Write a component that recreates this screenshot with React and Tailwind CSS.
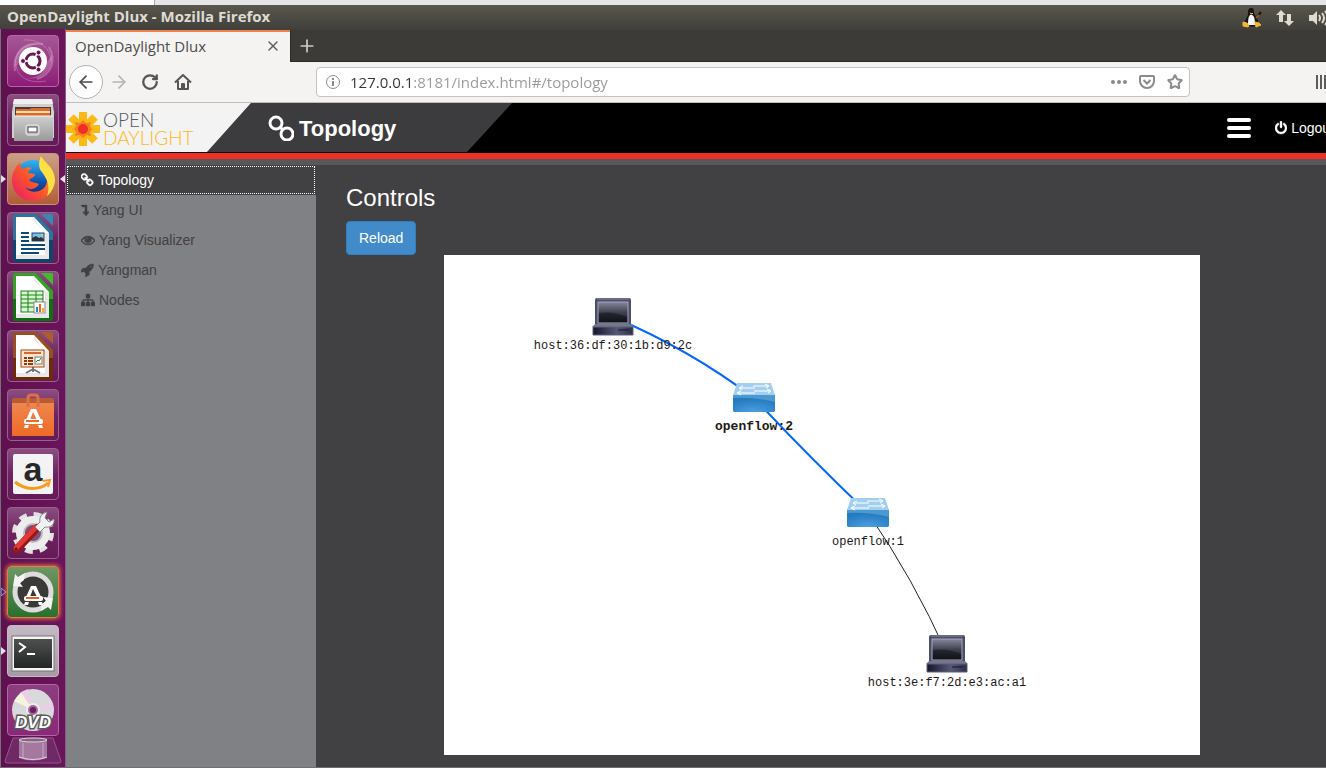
import { ArrowLeft, ArrowRight, Plus, RotateCw, Star, X } from 'lucide-react'
import clsx from 'clsx'

const paths = {
  link: 'M1456 1216q0-40-28-68l-208-208q-28-28-68-28-42 0-72 32 3 3 19 18.5t21.5 21.5 15 19 13 25.5 3.5 27.5q0 40-28 68t-68 28q-15 0-27.5-3.5t-25.5-13-19-15-21.5-21.5-18.5-19q-33 31-33 73 0 40 28 68l206 207q27 27 68 27 40 0 68-26l147-146q28-28 28-67zm-703-705q0-40-28-68l-206-207q-28-28-68-28-39 0-68 27l-147 146q-28 28-28 67 0 40 28 68l208 208q27 27 68 27 42 0 72-31-3-3-19-18.5t-21.5-21.5-15-19-13-25.5-3.5-27.5q0-40 28-68t68-28q15 0 27.5 3.5t25.5 13 19 15 21.5 21.5 18.5 19q33-31 33-73zm895 705q0 120-85 203l-147 146q-83 83-203 83-121 0-204-85l-206-207q-83-83-83-203 0-123 88-209l-88-88q-86 88-208 88-120 0-204-84l-208-208q-84-84-84-204t85-203l147-146q83-83 203-83 121 0 204 85l206 207q83 83 83 203 0 123-88 209l88 88q86-88 208-88 120 0 204 84l208 208q84 84 84 204z',
  levelDown: 'M32 256h672q26 0 45 19t19 45v800h192q40 0 58 38 16 36-10 68l-320 384q-18 22-48 22t-50-22l-320-384q-26-30-10-68 18-38 58-38h194v-608h-320q-14 0-24-11l-160-192q-14-16-5-35 9-18 29-18z',
  eye: 'M1664 960q-152-236-381-353 61 104 61 225 0 185-131.5 316.5t-316.5 131.5-316.5-131.5-131.5-316.5q0-121 61-225-229 117-381 353 133 205 333.5 326.5t434.5 121.5 434.5-121.5 333.5-326.5zm-720-384q0-20-14-34t-34-14q-125 0-214.5 89.5t-89.5 214.5q0 20 14 34t34 14 34-14 14-34q0-86 61-147t147-61q20 0 34-14t14-34zm848 384q0 34-20 69-140 230-376.5 368.5t-499.5 138.5-499.5-139-376.5-368q-20-35-20-69t20-69q140-229 376.5-368t499.5-139 499.5 139 376.5 368q20 35 20 69z',
  rocket: 'M1440 448q0-40-28-68t-68-28-68 28-28 68 28 68 68 28 68-28 28-68zm224-288q0 249-75.5 430.5t-253.5 360.5q-81 80-195 176l-20 379q-2 16-16 26l-384 224q-7 4-16 4-12 0-23-9l-64-64q-13-14-8-32l85-276-281-281-276 85q-3 1-9 1-14 0-23-9l-64-64q-17-19-5-39l224-384q10-14 26-16l379-20q96-114 176-195 188-187 358-258t431-71q14 0 24 9.5t10 22.5z',
  sitemap: 'M1792 1248v320q0 40-28 68t-68 28h-320q-40 0-68-28t-28-68v-320q0-40 28-68t68-28h96v-192h-512v192h96q40 0 68 28t28 68v320q0 40-28 68t-68 28h-320q-40 0-68-28t-28-68v-320q0-40 28-68t68-28h96v-192h-512v192h96q40 0 68 28t28 68v320q0 40-28 68t-68 28h-320q-40 0-68-28t-28-68v-320q0-40 28-68t68-28h96v-192q0-52 38-90t90-38h512v-192h-96q-40 0-68-28t-28-68v-320q0-40 28-68t68-28h320q40 0 68 28t28 68v320q0 40-28 68t-68 28h-96v192h512q52 0 90 38t38 90v192h96q40 0 68 28t28 68z',
  power: 'M1664 896q0 156-61 298t-164 245-245 164-298 61-298-61-245-164-164-245-61-298q0-182 80.5-343t226.5-270q43-32 95.5-25t83.5 50q32 42 24.5 94.5t-49.5 84.5q-98 74-151.5 181t-53.5 228q0 104 40.5 198.5t109.5 163.5 163.5 109.5 198.5 40.5 198.5-40.5 163.5-109.5 109.5-163.5 40.5-198.5q0-121-53.5-228t-151.5-181q-42-32-49.5-84.5t24.5-94.5q31-43 84-50t95 25q146 109 226.5 270t80.5 343zm-640-768v640q0 52-38 90t-90 38-90-38-38-90v-640q0-52 38-90t90-38 90 38 38 90z',
}

function Glyph({ name, box, className }) {
  return (
    <svg viewBox={box} className={clsx('h-[14px] shrink-0 fill-current stroke-current', className)} strokeWidth="50" aria-hidden="true">
      <path d={paths[name]} />
    </svg>
  )
}

const menu = [
  { label: 'Topology', icon: 'link', box: '64 0 1664 1792', width: 'w-[13px]', active: true },
  { label: 'Yang UI', icon: 'levelDown', box: '0 0 1024 1792', width: 'w-[8px]' },
  { label: 'Yang Visualizer', icon: 'eye', box: '0 0 1792 1792', width: 'w-[14px]' },
  { label: 'Yangman', icon: 'rocket', box: '64 0 1664 1792', width: 'w-[13px]' },
  { label: 'Nodes', icon: 'sitemap', box: '0 0 1792 1792', width: 'w-[14px]' },
]

/* ---------- launcher icons, all on a 52x52 grid ---------- */

function DashIcon() {
  return (
    <>
      <g fill="none" stroke="#e3b5d8" strokeOpacity=".4">
        <path d="M8 36C5 18 17 6 36 9" strokeWidth="2" />
        <path d="M42 12c8 14 2 28-12 32" strokeWidth="2" />
        <path d="M9 29c1 14 14 20 30 17M17 5c15-1 27 8 27 22" />
      </g>
      <path d="M8 32C7 15 19 7 35 9 22 9 14 16 13 27zM45 20c1 17-11 26-27 23 14 1 21-7 22-16z" fill="#fff" opacity=".22" />
      <circle cx="26" cy="26" r="14" fill="#fff" />
      <circle cx="26" cy="26" r="7" fill="none" stroke="#6a1655" strokeWidth="3" strokeDasharray="12.7 2" strokeDashoffset="-8" />
      <g fill="#6a1655" stroke="#fff">
        <circle cx="16" cy="26" r="2.5" />
        <circle cx="31.500" cy="17.500" r="2.500" />
        <circle cx="31.500" cy="34.500" r="2.500" />
      </g>
    </>
  )
}

function FilesIcon() {
  return (
    <>
      <path d="M7 5h38l2 13v26H5V18z" fill="#cfcfcf" />
      <path d="M7 5h38l1 5H6z" fill="#efefef" />
      <path d="M8 13h36v9H8z" fill="#4a3c35" />
      <path d="M9 15h14l1-1h19v8H9z" fill="#d96b2b" />
      <path d="M9 17h34v2H9z" fill="#ffdcae" />
      <path d="M7 22h39v25H7z" fill="url(#metal)" />
      <path d="M7 22h39" stroke="#f5f5f5" />
      <rect x="19" y="31" width="13" height="10" rx="2" fill="#bbb" stroke="#eee" />
      <rect x="21" y="33" width="9" height="5" fill="#fff" stroke="#555" />
    </>
  )
}

function FirefoxIcon() {
  return (
    <>
      <circle cx="26" cy="26" r="19" fill="url(#globe)" />
      <path d="M5 27c0-7 3-12 8-18 0 4 1 6 3 7 3-2 6-2 9-1-3 2-4 3-4 5l7 1c0 3-4 4-6 6 2 3 7 2 10 4-3 5-9 7-14 3 5 7 17 6 21-2 4-9-3-14-6-17C33 9 33 5 34 3c4 8 13 10 13 24 0 12-9 21-21 21S5 39 5 27z" fill="url(#fox)" />
      <path d="M34 3c4 8 14 11 14 25-1 7-4 12-8 15 4-11-1-19-6-25-3-5-2-10 0-15z" fill="#ffdf43" />
    </>
  )
}

function DocumentIcon({ dark, light, children }) {
  return (
    <>
      <path d="M8 2h21l17 18v28q0 2-2 2H8q-2 0-2-2V4q0-2 2-2z" fill={dark} />
      <path d="M8 2h21l17 18v8H6V4q0-2 2-2z" fill={light} opacity=".7" />
      <path d="M34 2h11l1 1v11z" fill={light} />
      <path d="M9 5h18l15 16v26H9z" fill="#fff" />
      <path d="M27 5v4l11 12h4v26H9v-4h29V23z" fill="#d9d9d9" opacity=".6" />
      {children}
    </>
  )
}

function WriterIcon() {
  return (
    <DocumentIcon dark="#0d466d" light="#3b86b4">
      <path d="M14 21h8M14 25h8M14 29h8M14 33h24M14 37h24M14 41h18" stroke="#0d4a74" strokeWidth="2" />
      <rect x="25" y="21" width="12" height="8" fill="#79bfe8" stroke="#0d4a74" />
      <path d="M25 29v-3l4-2 3 2 2-1 3 2v2z" fill="#333" />
      <circle cx="35" cy="23" r="1" fill="#ffd21c" />
    </DocumentIcon>
  )
}

function CalcIcon() {
  return (
    <DocumentIcon dark="#107010" light="#45b82e">
      <rect x="14" y="20" width="22" height="21" fill="#d9f5cf" stroke="#188518" />
      <path d="M14 24h22M14 28h22M14 32h22M14 36h22M21 20v21M29 20v21" stroke="#188518" />
      <rect x="27" y="31" width="11" height="11" fill="#fff" stroke="#888" />
      <path d="M30 41v-5" stroke="#2582c4" strokeWidth="2" />
      <path d="M33 41v-8" stroke="#e8641b" strokeWidth="2" />
      <path d="M36 41v-4" stroke="#efb31d" strokeWidth="2" />
    </DocumentIcon>
  )
}

function ImpressIcon() {
  return (
    <DocumentIcon dark="#6d2b0a" light="#ad5c2c">
      <path d="M26 37v5M26 39l-7 4M26 39l7 4" stroke="#777" strokeWidth="2" />
      <rect x="14" y="20" width="23" height="17" fill="#fde5d3" stroke="#a0440f" />
      <path d="M17 23h17" stroke="#d46a2e" strokeWidth="2" />
      <path d="M17 28h3M17 31h3M17 34h3M21 28h5M21 31h5M21 34h5" stroke="#8d3a0c" strokeWidth="2" />
      <rect x="28" y="27" width="7" height="7" fill="#fff" stroke="#777" />
      <path d="m29 32 2-2 1 1 2-3" stroke="#159327" fill="none" />
    </DocumentIcon>
  )
}

function CompassA({ fill }) {
  return (
    <>
      <path d="M24 20h5l5 11h-4l-4-8-3 8h-4z" fill="#fff" />
      <rect x="17" y="30" width="19" height="5" rx="2" fill="#fff" />
      <path d="M19 32h13" stroke={fill} strokeWidth="2" />
      <path d="M18 36h4l-1 3h-4zM31 36h4l1 3h-4z" fill="#fff" />
    </>
  )
}

function SoftwareIcon() {
  return (
    <>
      <path d="M6 9h40l1 5v33H5V14z" fill="url(#bag)" />
      <path d="M6 9h40l1 5H5z" fill="#b75b35" />
      <path d="M21 18v-9q0-3 3-3h4q3 0 3 3v9" fill="none" stroke="#dc7149" strokeWidth="3" />
      <CompassA fill="#ea6a2d" />
    </>
  )
}

function AmazonIcon() {
  return (
    <>
      <rect x="6" y="6" width="40" height="40" rx="2" fill="#f3f3f3" />
      <text x="26" y="33" textAnchor="middle" fontSize="34" fontWeight="700" fill="#272727" fontFamily="Liberation Sans, sans-serif">a</text>
      <path d="M8 34c10 8 24 9 33 1" fill="none" stroke="#f79b18" strokeWidth="3" />
      <path d="m36 33 7-1-2 7" fill="none" stroke="#f79b18" strokeWidth="2" />
    </>
  )
}

function SettingsIcon() {
  return (
    <>
      <circle cx="26" cy="26" r="18" fill="none" stroke="#e2e2e2" strokeWidth="6" strokeDasharray="7.500 6.640" />
      <circle cx="26" cy="26" r="13" fill="none" stroke="#ededed" strokeWidth="8" />
      <circle cx="26" cy="26" r="9" fill="#874a7d" stroke="#bbb" strokeWidth="2" />
      <path d="m10 42 20-21" stroke="#9b1515" strokeWidth="8" strokeLinecap="round" />
      <path d="m9 41 20-21" stroke="#df3a36" strokeWidth="5" strokeLinecap="round" />
      <circle cx="9" cy="42" r="1.500" fill="#651111" />
      <path d="m28 20 5-5c-1-5 2-9 7-10l-2 6 4 4 5-3c1 6-4 9-9 8l-5 5z" fill="#f1f1f1" stroke="#888" />
    </>
  )
}

function UpdaterIcon() {
  return (
    <>
      <circle cx="26" cy="26" r="18" fill="#393a38" stroke="#dcdcda" strokeWidth="5" />
      <path d="M6 20 8 8l3 3 7-4-1 7-4 3 3 4zM46 32l-2 12-3-3-7 4 1-7 4-3-3-4z" fill="#f3f3f1" />
      <CompassA fill="#e85e24" />
    </>
  )
}

function TerminalIcon() {
  return (
    <>
      <rect x="5" y="11" width="42" height="35" fill="#f5f5f5" stroke="#77727a" />
      <rect x="7" y="14" width="38" height="29" fill="url(#screen)" />
      <path d="m12 18 6 4-6 5" fill="none" stroke="#fff" strokeWidth="2" />
      <path d="M20 29h8" stroke="#fff" strokeWidth="2" />
    </>
  )
}

function DvdIcon() {
  return (
    <>
      <circle cx="26" cy="26" r="21" fill="#d9d9dc" />
      <path d="M26 26 7 17l7-9zM26 26l18 11-8 8z" fill="#f6f4dd" />
      <path d="m26 26-12-18 7-3zM26 26l19-8 2 8z" fill="#e9cee5" />
      <circle cx="26" cy="26" r="6" fill="#a267a0" stroke="#eee" strokeWidth="2" />
      <circle cx="26" cy="26" r="3" fill="#711b61" />
      <text x="26" y="44" textAnchor="middle" fontSize="17" fontWeight="700" fontStyle="italic" fill="#fff" stroke="#595959" strokeWidth="3" paintOrder="stroke" fontFamily="Liberation Sans, sans-serif">DVD</text>
    </>
  )
}

const glass = 'border-[#98628c] bg-linear-to-b from-[#8b4d80] via-[#6b2460] to-[#651a56]'

const launcher = [
  { name: 'Search', Icon: DashIcon, tile: 'border-[#b565a3] bg-linear-to-b from-[#a55696] to-[#8d1a76]' },
  { name: 'Files', Icon: FilesIcon, tile: glass },
  { name: 'Firefox', Icon: FirefoxIcon, tile: 'border-[#c6937b] bg-linear-to-b from-[#cba088] to-[#b15c35]', running: true, focused: true },
  { name: 'Writer', Icon: WriterIcon, tile: glass },
  { name: 'Calc', Icon: CalcIcon, tile: glass },
  { name: 'Impress', Icon: ImpressIcon, tile: glass },
  { name: 'Software', Icon: SoftwareIcon, tile: glass },
  { name: 'Amazon', Icon: AmazonIcon, tile: glass },
  { name: 'Settings', Icon: SettingsIcon, tile: glass },
  { name: 'Software Updater', Icon: UpdaterIcon, tile: 'border-[#e87d42] bg-linear-to-b from-[#709665] to-[#28702d] shadow-[0_0_4px_1px_#ed743c]', pending: true },
  { name: 'Terminal', Icon: TerminalIcon, tile: 'border-[#c5bbc3] bg-linear-to-b from-[#c4bac4] to-[#a69ba5]', running: true },
  { name: 'DVD', Icon: DvdIcon, tile: 'border-[#b565a3] bg-linear-to-b from-[#8b3e80] to-[#8a2878]' },
]

function Gradients() {
  return (
    <svg className="absolute size-0" aria-hidden="true">
      <defs>
        <linearGradient id="metal" x2="0" y2="1"><stop stopColor="#cfcfcf" /><stop offset="1" stopColor="#999" /></linearGradient>
        <linearGradient id="globe" x2="0" y2="1"><stop stopColor="#30b5f5" /><stop offset=".6" stopColor="#124da7" /><stop offset="1" stopColor="#17226b" /></linearGradient>
        <linearGradient id="fox" x1="0" y1="1" x2="1" y2="0"><stop stopColor="#e81570" /><stop offset=".45" stopColor="#fb542b" /><stop offset="1" stopColor="#ffcf36" /></linearGradient>
        <linearGradient id="bag" x2="0" y2="1"><stop stopColor="#f08a55" /><stop offset="1" stopColor="#ee6b26" /></linearGradient>
        <linearGradient id="screen" x2="0" y2="1"><stop stopColor="#4d504e" /><stop offset="1" stopColor="#242625" /></linearGradient>
        <linearGradient id="monitor" x2="0" y2="1"><stop stopColor="#85869c" /><stop offset=".5" stopColor="#40414f" /><stop offset="1" stopColor="#15161d" /></linearGradient>
        <linearGradient id="base" x2="1" y2="0"><stop stopColor="#15162a" /><stop offset=".6" stopColor="#575875" /><stop offset="1" stopColor="#2e2f45" /></linearGradient>
        <radialGradient id="switch" cy="1" r=".8"><stop stopColor="#49a0e2" /><stop offset="1" stopColor="#2579bd" /></radialGradient>
      </defs>
    </svg>
  )
}

function Launcher() {
  return (
    <nav aria-label="Launcher" className="flex w-[66px] shrink-0 flex-col gap-[7px] border-r border-l border-r-[#8a5a82] border-l-[#77717a] bg-linear-to-r from-[#5f104f] to-[#69155a] px-[6px] pt-[6px]">
      {launcher.map(({ name, Icon, tile, running, focused, pending }) => (
        <div key={name} className="relative">
          <button aria-label={name} className={clsx('block size-[52px] overflow-hidden rounded-[4px] border', tile)}>
            <svg viewBox="1 1 50 50" className="size-[50px]">
              <Icon />
            </svg>
          </button>
          {(running || pending) && (
            <svg viewBox="0 0 5 8" className="absolute top-[22px] -left-[6px] h-2 w-[5px]">
              <path d="M0 0l5 4-5 4z" fill={pending ? 'none' : '#e8dfe6'} stroke={pending ? '#8ca9ef' : 'none'} />
            </svg>
          )}
          {focused && (
            <svg viewBox="0 0 5 8" className="absolute top-[22px] -right-[6px] h-2 w-[5px]">
              <path d="M5 0L0 4l5 4z" fill="#e8dfe6" />
            </svg>
          )}
        </div>
      ))}
      <button aria-label="Trash" className="-mx-1 -mt-[6px] block">
        <svg viewBox="0 0 60 28" className="h-7 w-full">
          <path d="M10 1h40l8 23q0 2-2 2H4q-2 0-2-2z" fill="#6f2a65" stroke="#93578a" />
          <path d="M16 3v18q14 5 28 0V3z" fill="#a5799f" />
          <path d="M20 6v16M40 6v16" stroke="#d1b5cf" strokeWidth="2" opacity=".4" />
          <ellipse cx="30" cy="3" rx="14" ry="2" fill="#836581" stroke="#dfd0de" />
          <path d="M16 20q14 5 28 0" fill="none" stroke="#dfd0de" />
        </svg>
      </button>
    </nav>
  )
}

/* ---------- desktop panel ---------- */

function TitleBar() {
  return (
    <header className="flex h-[25px] items-center justify-between overflow-hidden bg-linear-to-b from-[#59574e] to-[#403f3a] pl-[7px] font-['Open_Sans','Noto_Sans',sans-serif]">
      <h1 className="pb-[3px] text-[15px] leading-[20px] font-bold text-[#dfdbd2]">OpenDaylight Dlux - Mozilla Firefox</h1>
      <div className="-mr-1 flex items-center gap-[14px]">
        <svg viewBox="0 0 20 20" className="size-5">
          <path d="M9 0c3 0 3 2 3 5 1 3 5 6 4 11l-5 3-8-2c-1-5 3-8 3-11s0-6 3-6z" fill="#161616" />
          <path d="M8 7c4-1 5 4 5 10H6c0-4 0-8 2-10z" fill="#f5f5f5" />
          <path d="m8 5 2 1 1-1M1 14l4 1 2 3-1 1-5-1zM13 14l4 1 2 2-5 2z" fill="#f4b830" stroke="#f4b830" />
          <path d="m14 10 5-6" stroke="#161616" strokeWidth="2" />
          <path d="m14 10 3-3" stroke="#a0522a" strokeWidth="2" />
        </svg>
        <svg viewBox="0 0 18 18" className="size-[18px] fill-[#dfdbd2]">
          <path d="M5 1l5 5H7v7H3V6H0zM13 17l-5-5h3V5h4v7h3z" />
        </svg>
        <svg viewBox="0 0 22 16" className="h-4 w-[22px]">
          <path d="M1 5h4l4-4v14l-4-4H1z" fill="#dfdbd2" />
          <path d="M11 5q2 3 0 6M14 3q4 5 0 10M17 1q6 7 0 14" fill="none" stroke="#dfdbd2" strokeWidth="2" />
        </svg>
      </div>
    </header>
  )
}

/* ---------- browser chrome ---------- */

function TabStrip() {
  return (
    <div className="flex h-8 border-b border-[#2b2a27] bg-[#3c3b37]">
      <div className="-mb-px flex w-56 items-center justify-between border-t-2 border-[#f0814f] bg-[#f4f3f1] px-[9px] pb-[2px]">
        <span className="text-[15px] leading-[20px] text-[#4c4c4c]">OpenDaylight Dlux</span>
        <button aria-label="Close tab">
          <X className="size-4 text-[#5c5c5c]" />
        </button>
      </div>
      <button aria-label="New tab" className="border-l border-[#2b2a27] px-[6px]">
        <Plus className="size-5 text-[#cfcdc7]" />
      </button>
    </div>
  )
}

function NavBar() {
  return (
    <div className="flex h-[41px] items-center overflow-hidden border-b border-[#c0bdba] bg-[#f4f3f1] pl-[3px]">
      <button aria-label="Back" className="flex size-[34px] items-center justify-center rounded-full border border-[#b3b1ae] bg-white">
        <ArrowLeft className="size-5 text-[#4a4a4a]" />
      </button>
      <button aria-label="Forward" className="ml-[6px]">
        <ArrowRight className="size-5 text-[#b5b4b2]" />
      </button>
      <button aria-label="Reload page" className="ml-3">
        <RotateCw className="size-[18px] text-[#555]" strokeWidth={3} />
      </button>
      <button aria-label="Home" className="ml-[15px]">
        <svg viewBox="0 0 18 18" className="size-[18px] text-[#555]" fill="none" stroke="currentColor" strokeWidth="2" strokeLinejoin="round">
          <path d="M1 9.500 9 2l8 7.500M4 8v8h10V8" />
          <path d="M8 16v-5h2v5" />
        </svg>
      </button>
      <div className="mr-[126px] ml-[124px] flex h-[30px] grow items-center rounded-[4px] border border-[#c5c2bf] bg-white pr-[6px] pl-[9px] text-[#8a8a8a]">
        <svg viewBox="0 0 14 14" className="size-[14px]" fill="none" stroke="currentColor">
          <circle cx="7" cy="7" r="6.500" />
          <path d="M7 6v5M7 3v2" strokeWidth="2" />
        </svg>
        {/* the host is darker than the rest of the address */}
        <input
          aria-label="Address"
          className="ml-[10px] h-6 min-w-0 grow bg-[linear-gradient(to_right,#333_63px,#999_63px)] bg-clip-text text-[15px] leading-[24px] text-transparent caret-black outline-none"
          defaultValue="127.0.0.1:8181/index.html#/topology"
        />
        <div className="flex items-center gap-3">
          <svg viewBox="0 0 16 4" className="h-1 w-4 fill-current">
            <circle cx="2" cy="2" r="2" />
            <circle cx="8" cy="2" r="2" />
            <circle cx="14" cy="2" r="2" />
          </svg>
          <svg viewBox="0 0 16 14" className="h-[14px] w-4" fill="none" stroke="currentColor" strokeWidth="2">
            <path d="M2 1h12q1 0 1 1v4a7 7 0 0 1-14 0V2q0-1 1-1z" />
            <path d="m4.500 5 3.500 3.500L11.500 5" />
          </svg>
          <Star className="size-4" strokeWidth={3} />
        </div>
      </div>
      <svg viewBox="0 0 16 14" className="-mr-[6px] h-[14px] w-4 shrink-0" stroke="#5c5c5c" strokeWidth="2">
        <path d="M1 0v14M5 0v14M9 0v14M12 1l3 13" />
      </svg>
    </div>
  )
}

/* ---------- dlux page ---------- */

function Logo() {
  return (
    <a href="#/topology" className="relative z-10 flex h-[49px] w-[185px] shrink-0 items-center gap-[3px] bg-[#f3f3f3] pt-[2px] [clip-path:polygon(0_0,100%_0,141px_100%,0_100%)]">
      <svg viewBox="-17 -17 34 34" className="size-[34px] shrink-0">
        <g stroke="#fdb913" strokeWidth="8">
          <path d="M0-17v34M-17 0h34M-12-12l24 24M-12 12l24-24" />
        </g>
        <path d="M0-9 3-6l5-1-1 4 2 3-2 3 1 4-5-1-3 3-3-3-5 1 1-4-2-3 2-3-1-4 5 1z" fill="#f58220" />
        <circle r="5" fill="#ee2f24" />
      </svg>
      <span className="font-[Lato,sans-serif] text-[19px] leading-[18px] font-light">
        <span className="block text-[#58595b]">OPEN</span>
        <span className="block text-[#fdb913]">DAYLIGHT</span>
      </span>
    </a>
  )
}

function PageHeader() {
  return (
    <header className="flex h-[50px] overflow-hidden bg-black text-white">
      <Logo />
      <div className="-ml-11 flex h-[49px] w-[305px] shrink-0 items-center gap-[5px] bg-[#3c3c3e] pl-[61px] [clip-path:polygon(44px_0,100%_0,260px_100%,0_100%)]">
        <svg viewBox="0 0 26 26" className="size-[26px]" fill="none" stroke="currentColor" strokeWidth="3">
          <circle cx="8" cy="8" r="6" />
          <circle cx="19" cy="19" r="6" />
          <path d="m12 12 3 3" />
        </svg>
        <h2 className="pt-px text-[22px] font-bold">Topology</h2>
      </div>
      <div className="-mr-[8px] ml-auto flex items-center gap-6">
        <button aria-label="Toggle menu" className="flex w-6 flex-col gap-1">
          <span className="h-1 rounded-xs bg-white" />
          <span className="h-1 rounded-xs bg-white" />
          <span className="h-1 rounded-xs bg-white" />
        </button>
        <a href="#/login" className="flex items-center gap-1 text-[14px]">
          <Glyph name="power" box="128 0 1536 1792" className="w-[12px]" />
          Logout
        </a>
      </div>
    </header>
  )
}

function Sidebar() {
  return (
    <aside className="w-[250px] shrink-0 bg-[#808184]">
      <ul>
        {menu.map((item) => (
          <li key={item.label}>
            <a
              href="#/topology"
              className={clsx(
                'flex h-[30px] items-center gap-1 pl-[15px] text-[14px]',
                item.active ? 'bg-[#414042] text-white outline-1 -outline-offset-2 outline-dotted outline-white' : 'text-[#414042]',
              )}
            >
              <Glyph name={item.icon} box={item.box} className={item.width} />
              {item.label}
            </a>
          </li>
        ))}
      </ul>
    </aside>
  )
}

const nodes = [
  { id: 'host:36:df:30:1b:d9:2c', type: 'host', x: 169, y: 62 },
  { id: 'openflow:2', type: 'switch', x: 310, y: 143, selected: true },
  { id: 'openflow:1', type: 'switch', x: 424, y: 258 },
  { id: 'host:3e:f7:2d:e3:ac:a1', type: 'host', x: 503, y: 399 },
]

function HostShape() {
  return (
    <g>
      <path d="M-18-17q0-2 2-2h32q2 0 2 2V7h-36z" fill="#4c4d68" />
      <path d="M-16-18h32" stroke="#8889a4" />
      <rect x="-15" y="-15" width="30" height="21" fill="url(#monitor)" stroke="#a3a4b8" />
      <path d="M-14-4Q0-6 14 0v5h-28z" fill="#0c0d12" opacity=".5" />
      <path d="M-18 7h36l3 3h-42z" fill="#74758f" />
      <path d="M-20 10h40v8h-40z" fill="url(#base)" stroke="#5d5e78" />
      <path d="M5 13h11" stroke="#15162a" />
    </g>
  )
}

function SwitchShape() {
  return (
    <g>
      <path d="m-17-15h34l4 12h-42z" fill="#a2cff0" />
      <path d="M-21-3h42v16l-1 1h-40l-1-1z" fill="url(#switch)" />
      <path d="M-21-3h42v7Q0-1-21 0z" fill="#67afe0" opacity=".6" />
      <g stroke="#fff" fill="none">
        <path d="M-14-10H1m-12-2-4 2 3 2M-1-12h15m-3-2 4 2-3 2M-16-5H1m-14-2-4 2 4 2M0-7h16m-3-2 4 2-3 2" />
      </g>
    </g>
  )
}

function TopologyCanvas() {
  return (
    <svg viewBox="0 0 756 500" className="mx-auto block w-[756px] max-w-full bg-white" role="img" aria-label="Network topology">
      <g fill="none">
        <path d="M169 62Q245 94 310 143" stroke="#0466ff" strokeWidth="2" />
        <path d="M310 143Q365 202 424 258" stroke="#0466ff" strokeWidth="2" />
        <path d="M424 258Q469 323 503 399" stroke="#222" />
      </g>
      {nodes.map((node) => (
        <g key={node.id} transform={`translate(${node.x} ${node.y})`}>
          {node.type === 'host' ? <HostShape /> : <SwitchShape />}
          <text
            y="32"
            textAnchor="middle"
            fill="#231815"
            className={clsx("font-['Liberation_Mono',monospace]", node.selected ? 'text-[13px] font-bold' : 'text-[12px]')}
          >
            {node.id}
          </text>
        </g>
      ))}
    </svg>
  )
}

function DluxPage() {
  return (
    <div className="flex grow flex-col font-['Liberation_Sans',Arial,sans-serif]">
      <PageHeader />
      <div className="h-3 border-t-6 border-[#ee2f24] bg-[#58585a]" />
      <div className="flex grow">
        <Sidebar />
        <main className="min-w-0 grow bg-[#414042] pt-5 pr-7 pb-3 pl-[30px]">
          <h3 className="text-[24px] leading-[26px] text-white">Controls</h3>
          <button className="mt-[10px] block h-[34px] rounded-[4px] border border-[#357ebd] bg-[#428bca] px-3 text-[14px] text-white">
            Reload
          </button>
          <TopologyCanvas />
        </main>
      </div>
    </div>
  )
}

export default function App() {
  return (
    <div className="flex min-h-screen flex-col overflow-hidden border-b border-[#6e6e70] bg-[#3c3b37]">
      <Gradients />
      <div className="flex h-[5px] bg-[#e4e5e7]">
        <div className="w-[155px] border-r border-[#aaa] bg-white" />
      </div>
      <TitleBar />
      <div className="-mt-px flex grow">
        <Launcher />
        <div className="flex min-w-0 grow flex-col pt-px">
          <div className="font-['Open_Sans','Noto_Sans',sans-serif]">
            <TabStrip />
            <NavBar />
          </div>
          <DluxPage />
        </div>
      </div>
    </div>
  )
}
